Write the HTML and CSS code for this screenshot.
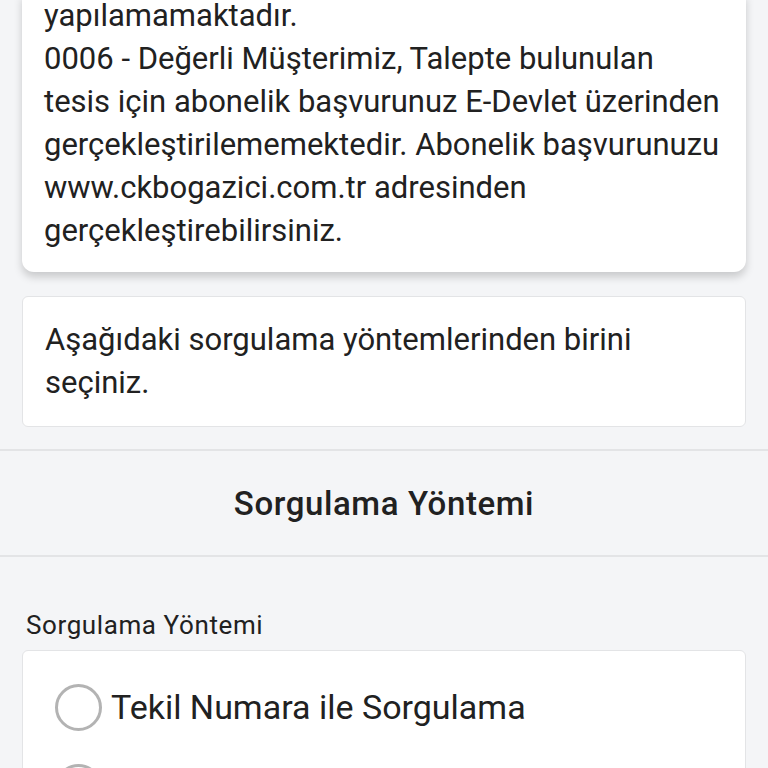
FILE: index.html
```html
<!DOCTYPE html>
<html lang="tr">
<head>
<meta charset="utf-8">
<link rel="stylesheet" href="styles.css">
</head>
<body>
<div class="notice-card">
  <p class="notice-text">yapılamamaktadır.<br>0006 - Değerli Müşterimiz, Talepte bulunulan tesis için abonelik başvurunuz E-Devlet üzerinden gerçekleştirilememektedir. Abonelik başvurunuzu www.ckbogazici.com.tr adresinden gerçekleştirebilirsiniz.</p>
</div>
<div class="info-card">
  <p class="info-text">Aşağıdaki sorgulama yöntemlerinden birini seçiniz.</p>
</div>
<div class="section-title">Sorgulama Yöntemi</div>
<div class="field">
  <div class="field-label">Sorgulama Yöntemi</div>
  <div class="radio-card">
    <label class="radio-row"><span class="radio"></span><span class="radio-text">Tekil Numara ile Sorgulama</span></label>
    <label class="radio-row"><span class="radio"></span><span class="radio-text">Adres ile Sorgulama</span></label>
  </div>
</div>
</body>
</html>
```
FILE: styles.css
```css
html, body {
  margin: 0;
  padding: 0;
}
body {
  background: #f4f5f7;
  font-family: Roboto, "Noto Sans", sans-serif;
  color: #212121;
  overflow: hidden;
  height: 768px;
}
p { margin: 0; }
.notice-card {
  margin: 0 22px;
  background: #fff;
  border-radius: 0 0 12px 12px;
  padding: 0 22px 20px;
  box-shadow: 0 5px 8px rgba(0,0,0,0.18);
}
.notice-text {
  font-size: 31px;
  line-height: 43px;
  margin-top: -6px;
}
.info-card {
  margin: 24px 22px 0;
  background: #fff;
  border: 1px solid #e3e4e6;
  border-radius: 6px;
  padding: 21px 22px 22px;
}
.info-text {
  font-size: 31px;
  line-height: 43px;
}
.section-title {
  margin-top: 22px;
  border-top: 2px solid #e3e4e6;
  border-bottom: 2px solid #e3e4e6;
  height: 104px;
  display: flex;
  align-items: center;
  justify-content: center;
  font-size: 33px;
  letter-spacing: 0.6px;
  font-weight: 500;
}
.field {
  padding: 52px 22px 0;
}
.field-label {
  font-size: 26px;
  letter-spacing: 0.6px;
  line-height: 32px;
  margin-left: 4px;
}
.radio-card {
  margin-top: 9px;
  background: #fff;
  border: 1px solid #e3e4e6;
  border-radius: 6px;
  padding: 33px 32px;
  display: flex;
  flex-direction: column;
  gap: 33px;
}
.radio-row {
  display: flex;
  align-items: center;
  gap: 9px;
}
.radio {
  width: 41px;
  height: 41px;
  border: 3px solid #b3b3b3;
  border-radius: 50%;
  flex: none;
}
.radio-text {
  font-size: 34px;
  line-height: 47px;
}
```
